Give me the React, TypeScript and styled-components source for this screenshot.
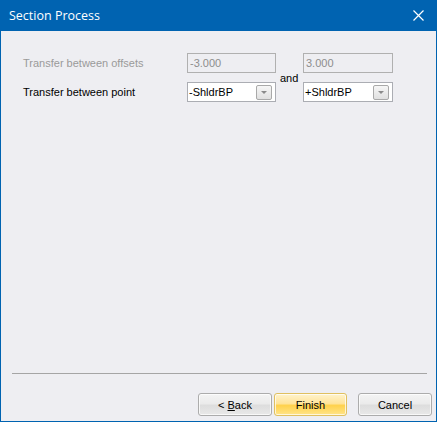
import React from "react";
import styled, { createGlobalStyle } from "styled-components";

const Global = createGlobalStyle`
  html, body { margin: 0; padding: 0; background: #ffffff; }
  * { box-sizing: border-box; }
`;

const Window = styled.div`
  width: 437px;
  height: 422px;
  display: flex;
  flex-direction: column;
  background: #eeeef2;
  border: 1px solid #0063b1;
  border-top: none;
  font-family: "Liberation Sans", Arial, sans-serif;
  font-size: 11px;
  overflow: hidden;
`;

const TitleBar = styled.div`
  height: 31px;
  margin: 0 -1px;
  background: #0063b1;
  color: #ffffff;
  display: flex;
  align-items: center;
  justify-content: space-between;
  padding: 0 9px 1px 9px;
  font-family: "Open Sans", "Noto Sans", sans-serif;
  font-size: 12.5px;
`;

const CloseIcon = styled.svg`
  width: 11px;
  height: 11px;
  margin-right: 4px;
`;

const Body = styled.div`
  flex: 1;
  padding: 22px 0 0 22px;
`;

const FormGrid = styled.div`
  display: grid;
  grid-template-columns: 164px 89px 27px 90px;
  grid-template-rows: 20px 20px;
  row-gap: 9px;
  align-items: center;
`;

const Label = styled.div<{ $disabled?: boolean }>`
  color: ${(p) => (p.$disabled ? "#9a9a9a" : "#000000")};
  white-space: nowrap;
`;

const TextField = styled.div<{ $disabled?: boolean; $col?: number }>`
  grid-column: ${(p) => p.$col ?? "auto"};
  height: 20px;
  border: 1px solid ${(p) => (p.$disabled ? "#b0b0b0" : "#abadb3")};
  background: ${(p) => (p.$disabled ? "#eeeef2" : "#ffffff")};
  color: ${(p) => (p.$disabled ? "#8d8d8d" : "#000000")};
  display: flex;
  align-items: center;
  padding: 0 2px;
`;

const Combo = styled(TextField)`
  justify-content: space-between;
  padding: 0 2px 0 1px;
`;

const DropButton = styled.div`
  width: 16px;
  height: 15px;
  border: 1px solid #a9a9a9;
  border-radius: 2px;
  background: linear-gradient(#f6f6f6, #e0e0e0);
  display: flex;
  align-items: center;
  justify-content: center;
  margin-right: 1px;
`;

const Arrow = styled.div`
  width: 0;
  height: 0;
  border-left: 3px solid transparent;
  border-right: 3px solid transparent;
  border-top: 3px solid #8a8a8a;
  margin-top: 1px;
`;

const AndText = styled.div`
  grid-column: 3;
  grid-row: 1 / span 2;
  align-self: center;
  padding-left: 4px;
  color: #000;
`;

const Separator = styled.div`
  height: 1px;
  background: #a5a5a5;
  margin: 0 9px 0 11px;
`;

const ButtonRow = styled.div`
  display: flex;
  justify-content: flex-end;
  padding: 19px 4px 5px 0;
  gap: 2px;
`;

const Button = styled.div<{ $primary?: boolean; $gapLeft?: number }>`
  width: ${(p) => (p.$primary ? 73 : 74)}px;
  height: 23px;
  margin-left: ${(p) => p.$gapLeft ?? 0}px;
  border: 1px solid ${(p) => (p.$primary ? "#e0c060" : "#acacac")};
  border-radius: 3px;
  background: ${(p) =>
    p.$primary
      ? "linear-gradient(#fff3cc 0%, #ffe49a 45%, #ffd24c 55%, #ffe48a 100%)"
      : "linear-gradient(#f4f4f4 0%, #ebebeb 45%, #dddddd 55%, #e9e9e9 100%)"};
  display: flex;
  align-items: center;
  justify-content: center;
  color: #000;
  box-shadow: inset 0 0 0 1px rgba(255, 255, 255, 0.7);
`;

const U = styled.span`
  text-decoration: underline;
`;

export default function App() {
  return (
    <>
      <Global />
      <Window>
        <TitleBar>
          <span>Section Process</span>
          <CloseIcon viewBox="0 0 11 11">
            <path d="M0.5 0.5 L10.5 10.5 M10.5 0.5 L0.5 10.5" stroke="#fff" strokeWidth="1.2" />
          </CloseIcon>
        </TitleBar>
        <Body>
          <FormGrid>
            <Label $disabled>Transfer between offsets</Label>
            <TextField $disabled>-3.000</TextField>
            <AndText>and</AndText>
            <TextField $disabled $col={4}>3.000</TextField>
            <Label>Transfer between point</Label>
            <Combo>
              <span>-ShldrBP</span>
              <DropButton><Arrow /></DropButton>
            </Combo>
            <Combo $col={4}>
              <span>+ShldrBP</span>
              <DropButton><Arrow /></DropButton>
            </Combo>
          </FormGrid>
        </Body>
        <Separator />
        <ButtonRow>
          <Button>
            &lt;&nbsp;<U>B</U>ack
          </Button>
          <Button $primary>Finish</Button>
          <Button $gapLeft={9}>Cancel</Button>
        </ButtonRow>
      </Window>
    </>
  );
}
